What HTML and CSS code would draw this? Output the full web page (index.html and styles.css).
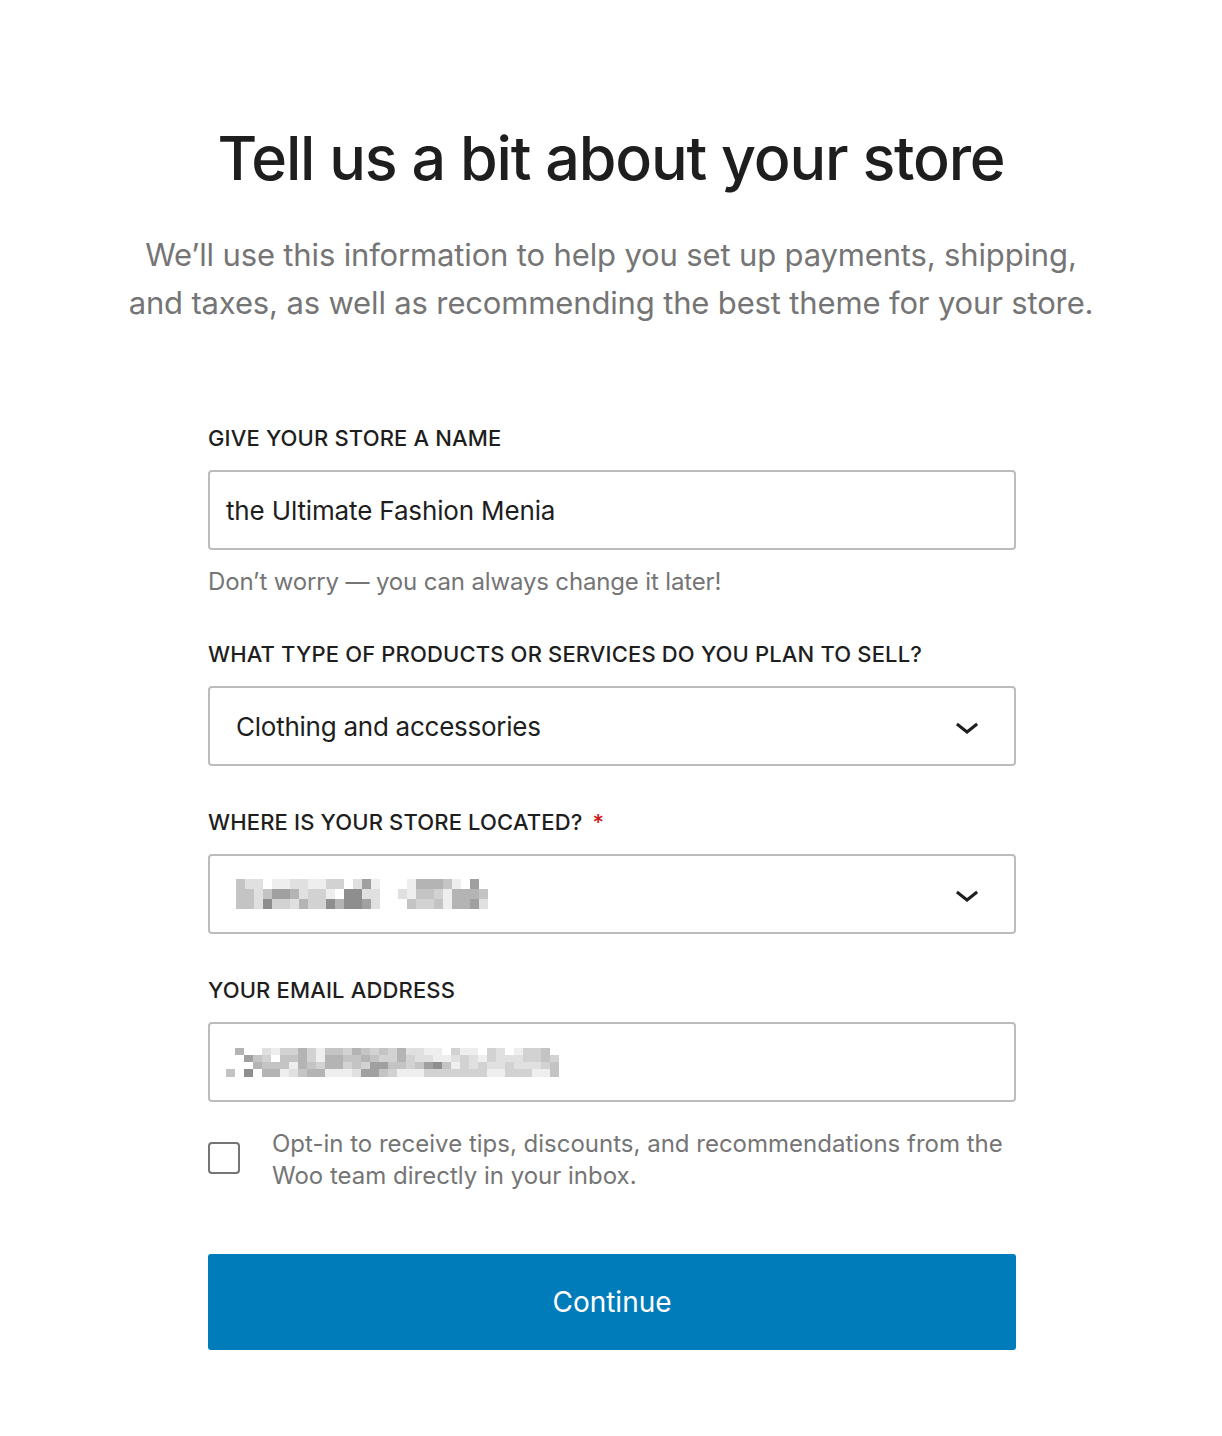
FILE: index.html
```html
<!DOCTYPE html>
<html lang="en">
<head>
<meta charset="utf-8">
<title>Tell us a bit about your store</title>
<link rel="stylesheet" href="styles.css">
</head>
<body>
<main class="page">
  <header class="intro">
    <h1 class="title">Tell us a bit about your store</h1>
    <p class="lead">We’ll use this information to help you set up payments, shipping,<br>and taxes, as well as recommending the best theme for your store.</p>
  </header>
  <form class="form">
    <div class="field">
      <label class="label">GIVE YOUR STORE A NAME</label>
      <div class="control"><span class="value">the Ultimate Fashion Menia</span></div>
      <p class="help">Don’t worry — you can always change it later!</p>
    </div>
    <div class="field">
      <label class="label">WHAT TYPE OF PRODUCTS OR SERVICES DO YOU PLAN TO SELL?</label>
      <div class="control select"><span class="value">Clothing and accessories</span>
        <svg class="chev" viewBox="0 0 24 24" width="48" height="48" aria-hidden="true"><path d="M17.5 11.6L12 16l-5.5-4.4.9-1.2L12 14l4.6-3.6 1 1.2z"/></svg>
      </div>
    </div>
    <div class="field">
      <label class="label">WHERE IS YOUR STORE LOCATED?<span class="req">*</span></label>
      <div class="control select">
        <div class="pix loc">
          <div class="prow"><i class="s4"></i><i class="s2"></i><i class="s2"></i><i></i><i class="s1"></i><i class="s1"></i><i class="s2"></i><i class="s2"></i><i class="s1"></i><i class="s1"></i><i class="s3"></i><i class="s3"></i><i></i><i class="s2"></i><i class="s6"></i><i class="s1"></i><i></i><i></i><i></i><i class="s1"></i><i class="s5"></i><i class="s5"></i><i class="s5"></i><i class="s4"></i><i class="s1"></i><i></i><i class="s6"></i><i></i></div>
          <div class="prow"><i class="s4"></i><i class="s4"></i><i class="s2"></i><i class="s4"></i><i class="s6"></i><i class="s6"></i><i class="s5"></i><i class="s2"></i><i class="s3"></i><i class="s3"></i><i class="s1"></i><i></i><i class="s7"></i><i class="s7"></i><i class="s2"></i><i class="s2"></i><i></i><i></i><i class="s2"></i><i class="s1"></i><i class="s4"></i><i class="s4"></i><i class="s3"></i><i class="s1"></i><i class="s5"></i><i class="s5"></i><i class="s5"></i><i class="s4"></i></div>
          <div class="prow"><i class="s4"></i><i class="s4"></i><i class="s2"></i><i class="s7"></i><i class="s3"></i><i class="s3"></i><i class="s2"></i><i class="s5"></i><i class="s3"></i><i class="s3"></i><i class="s7"></i><i class="s5"></i><i class="s7"></i><i class="s7"></i><i class="s6"></i><i class="s2"></i><i></i><i></i><i></i><i class="s4"></i><i class="s3"></i><i class="s3"></i><i class="s4"></i><i class="s1"></i><i class="s5"></i><i class="s5"></i><i class="s6"></i><i class="s2"></i></div>
        </div>
        <svg class="chev" viewBox="0 0 24 24" width="48" height="48" aria-hidden="true"><path d="M17.5 11.6L12 16l-5.5-4.4.9-1.2L12 14l4.6-3.6 1 1.2z"/></svg>
      </div>
    </div>
    <div class="field">
      <label class="label">YOUR EMAIL ADDRESS</label>
      <div class="control email">
        <div class="pix mail">
          <div class="prow"><i></i><i class="s5"></i><i></i><i></i><i class="s2"></i><i class="s1"></i><i class="s3"></i><i class="s3"></i><i class="s5"></i><i class="s3"></i><i class="s1"></i><i class="s4"></i><i class="s4"></i><i class="s3"></i><i class="s5"></i><i class="s4"></i><i class="s3"></i><i class="s4"></i><i class="s3"></i><i class="s5"></i><i class="s2"></i><i class="s2"></i><i class="s1"></i><i class="s1"></i><i></i><i class="s3"></i><i class="s1"></i><i class="s1"></i><i></i><i class="s3"></i><i class="s2"></i><i></i><i class="s1"></i><i class="s3"></i><i class="s3"></i><i class="s4"></i><i></i></div>
          <div class="prow"><i></i><i></i><i class="s6"></i><i class="s4"></i><i class="s3"></i><i></i><i class="s4"></i><i class="s4"></i><i class="s5"></i><i class="s3"></i><i class="s1"></i><i class="s5"></i><i class="s5"></i><i class="s4"></i><i class="s4"></i><i class="s5"></i><i class="s4"></i><i class="s3"></i><i class="s3"></i><i class="s5"></i><i class="s3"></i><i class="s2"></i><i class="s2"></i><i class="s1"></i><i class="s1"></i><i class="s2"></i><i class="s3"></i><i class="s2"></i><i class="s1"></i><i class="s3"></i><i class="s2"></i><i class="s2"></i><i class="s2"></i><i class="s3"></i><i class="s3"></i><i class="s4"></i><i class="s3"></i></div>
          <div class="prow"><i></i><i></i><i></i><i class="s5"></i><i class="s4"></i><i class="s4"></i><i class="s4"></i><i class="s1"></i><i class="s5"></i><i class="s4"></i><i class="s3"></i><i class="s5"></i><i class="s5"></i><i class="s3"></i><i class="s4"></i><i class="s3"></i><i class="s6"></i><i class="s6"></i><i class="s4"></i><i class="s4"></i><i class="s3"></i><i class="s4"></i><i class="s6"></i><i class="s7"></i><i class="s4"></i><i class="s1"></i><i class="s3"></i><i class="s2"></i><i class="s3"></i><i class="s2"></i><i class="s2"></i><i class="s3"></i><i class="s2"></i><i class="s2"></i><i class="s2"></i><i class="s3"></i><i class="s4"></i></div>
          <div class="prow"><i class="s4"></i><i></i><i class="s7"></i><i></i><i class="s5"></i><i class="s5"></i><i class="s1"></i><i class="s2"></i><i class="s4"></i><i class="s5"></i><i class="s5"></i><i class="s1"></i><i class="s1"></i><i class="s1"></i><i class="s2"></i><i class="s6"></i><i class="s6"></i><i class="s4"></i><i class="s3"></i><i class="s1"></i><i class="s1"></i><i class="s1"></i><i class="s3"></i><i class="s3"></i><i class="s3"></i><i class="s3"></i><i class="s3"></i><i class="s3"></i><i class="s3"></i><i class="s1"></i><i class="s1"></i><i class="s3"></i><i class="s3"></i><i class="s3"></i><i class="s1"></i><i class="s1"></i><i class="s4"></i></div>
        </div>
      </div>
    </div>
    <div class="optin">
      <span class="checkbox" role="checkbox" aria-checked="false"></span>
      <p class="optin-text">Opt-in to receive tips, discounts, and recommendations from the Woo team directly in your inbox.</p>
    </div>
    <button type="button" class="continue">Continue</button>
  </form>
</main>
</body>
</html>
```

FILE: styles.css
```css
* { box-sizing: border-box; }
html, body { margin: 0; padding: 0; background: #fff; }
body {
  font-family: Inter, "Noto Sans", "Liberation Sans", sans-serif;
  color: #1e1e1e;
}
.page {
  display: flex;
  flex-direction: column;
  align-items: center;
  padding: 120px 0 80px;
}
.intro { text-align: center; }
.title {
  margin: 0;
  font-size: 61px;
  line-height: 77px;
  font-weight: 500;
  letter-spacing: -1.2px;
  color: #1e1e1e;
}
.lead {
  margin: 34px 0 0;
  font-size: 31px;
  line-height: 48px;
  letter-spacing: -0.15px;
  color: #757575;
  font-weight: 400;
}
.form {
  width: 808px;
  margin-top: 97px;
  margin-left: 2px;
  display: flex;
  flex-direction: column;
}
.field {
  display: flex;
  flex-direction: column;
  margin-bottom: 42px;
}
.field:nth-child(4) { margin-bottom: 26px; }
.label {
  display: block;
  font-size: 22px;
  line-height: 28px;
  font-weight: 500;
  letter-spacing: 0.15px;
  color: #1e1e1e;
  margin-bottom: 18px;
}
.req { color: #cc1818; margin-left: 10px; }
.control {
  height: 80px;
  border: 2px solid #bcbcbc;
  border-radius: 4px;
  display: flex;
  align-items: center;
  padding: 0 16px;
  background: #fff;
}
.value {
  font-size: 26px;
  letter-spacing: -0.15px;
  color: #1e1e1e;
}
.select { padding: 0 23px 0 26px; justify-content: space-between; }
.select .value { letter-spacing: -0.25px; }
.chev { fill: #1e1e1e; flex: none; }
.email { padding-left: 16px; }
.help {
  margin: 16px 0 0;
  font-size: 24px;
  line-height: 32px;
  letter-spacing: -0.15px;
  color: #757575;
}
.pix { display: flex; flex-direction: column; }
.prow { display: flex; }
.loc .prow i { width: 9px; height: 10px; }
.mail .prow i { width: 9px; height: 7.25px; }
.pix i { display: block; flex: none; }
.s1 { background: #eeeeee; }
.s2 { background: #e0e0e0; }
.s3 { background: #d2d2d2; }
.s4 { background: #c4c4c4; }
.s5 { background: #b4b4b4; }
.s6 { background: #a0a0a0; }
.s7 { background: #8e8e8e; }
.optin {
  display: flex;
  align-items: center;
  gap: 32px;
}
.checkbox {
  flex: none;
  width: 32px;
  height: 32px;
  border: 2px solid #757575;
  border-radius: 4px;
  margin-top: -4px;
}
.optin-text {
  margin: 0;
  font-size: 24px;
  line-height: 32px;
  color: #757575;
  letter-spacing: 0;
}
.continue {
  margin-top: 62px;
  height: 96px;
  width: 100%;
  border: none;
  border-radius: 3px;
  background: #007cba;
  color: #fff;
  font-family: inherit;
  font-size: 28px;
  font-weight: 400;
}
```
